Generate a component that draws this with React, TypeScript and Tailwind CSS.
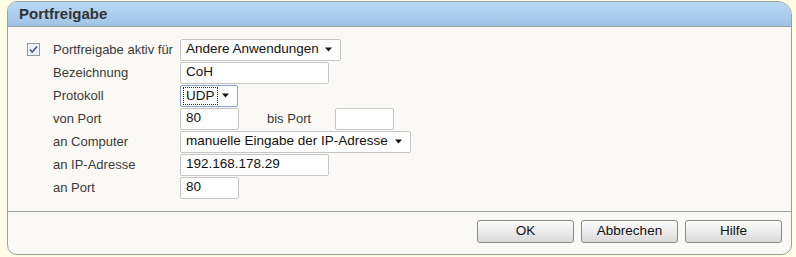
import React from 'react'

const font = { fontFamily: '"Liberation Sans", Arial, sans-serif' }

function Arrow() {
  return (
    <svg width="8" height="5" viewBox="0 0 8 5" className="shrink-0">
      <path d="M0 0.5 H7 L3.5 4.5 Z" fill="#111" />
    </svg>
  )
}

function TextBox({ value, w }: { value: string; w: string }) {
  return (
    <div className={`${w} h-[22px] border border-[#c6c6c6] rounded-[2px] bg-white pl-[5px] flex items-center text-[13.5px] text-[#111]`}>
      {value}
    </div>
  )
}

function Select({ value, w, focused }: { value: string; w: string; focused?: boolean }) {
  return (
    <div
      className={`${w} h-[22px] border rounded-[2px] bg-white flex items-center justify-between pr-[7px] text-[13.5px] text-[#111] ${
        focused ? 'border-[#8aa6cc] pl-[2px]' : 'border-[#c6c6c6] pl-[5px]'
      }`}
    >
      {focused ? (
        <span className="border border-dotted border-[#222] px-[2px] leading-[16px]">{value}</span>
      ) : (
        <span>{value}</span>
      )}
      <Arrow />
    </div>
  )
}

function Row({ label, children }: { label: string; children: React.ReactNode }) {
  return (
    <div className="flex items-center h-[23px]">
      <div className="w-[127px] pl-[45px] box-content text-[13px] text-[#3a3a3a]">{label}</div>
      {children}
    </div>
  )
}

function Btn({ label }: { label: string }) {
  return (
    <div className="w-[97px] h-[23px] rounded-[3px] border border-[#8a8a8a] bg-gradient-to-b from-[#fbfbfb] via-[#ececec] to-[#d9d9d9] flex items-center justify-center text-[13.5px] text-[#111]">
      {label}
    </div>
  )
}

export default function App() {
  return (
    <div className="w-[796px] h-[257px] bg-[#fffde6] pl-[7px] pt-[1px]" style={font}>
      <div className="w-[785px] h-[254px] border border-[#97a39c] rounded-tl-[10px] rounded-tr-[14px] rounded-bl-[10px] rounded-br-[10px] overflow-hidden flex flex-col bg-[#faf9f6]">
        {/* Header */}
        <div className="h-[25px] shrink-0 bg-gradient-to-b from-[#b8d9f3] to-[#a1c4e7] border-b border-[#97a39c] flex items-center pl-[11px]">
          <span className="text-[15px] font-bold text-[#333]">Portfreigabe</span>
        </div>

        {/* Form */}
        <div className="flex-1 pt-[11px]">
          <div className="flex items-center h-[23px]">
            <div className="w-[45px] pl-[19px] flex items-center">
              <svg width="13" height="13" viewBox="0 0 13 13">
                <rect x="0.5" y="0.5" width="12" height="12" fill="#eef1f6" stroke="#8f9aa6" />
                <path d="M3 6.5 L5.2 9 L10 3.5" fill="none" stroke="#4a5f96" strokeWidth="1.8" />
              </svg>
            </div>
            <div className="w-[127px] text-[13px] text-[#3a3a3a]">Portfreigabe aktiv für</div>
            <Select value="Andere Anwendungen" w="w-[161px]" />
          </div>
          <Row label="Bezeichnung">
            <TextBox value="CoH" w="w-[149px]" />
          </Row>
          <Row label="Protokoll">
            <Select value="UDP" w="w-[58px]" focused />
          </Row>
          <Row label="von Port">
            <TextBox value="80" w="w-[59px]" />
            <div className="w-[96px] pl-[28px] text-[13px] text-[#3a3a3a]">bis Port</div>
            <TextBox value="" w="w-[59px]" />
          </Row>
          <Row label="an Computer">
            <Select value="manuelle Eingabe der IP-Adresse" w="w-[231px]" />
          </Row>
          <Row label="an IP-Adresse">
            <TextBox value="192.168.178.29" w="w-[149px]" />
          </Row>
          <Row label="an Port">
            <TextBox value="80" w="w-[59px]" />
          </Row>
        </div>

        {/* Footer */}
        <div className="h-[43px] shrink-0 border-t border-[#97a39c] flex justify-end items-start pt-[8px] pr-[9px] gap-[7px]">
          <Btn label="OK" />
          <Btn label="Abbrechen" />
          <Btn label="Hilfe" />
        </div>
      </div>
    </div>
  )
}
